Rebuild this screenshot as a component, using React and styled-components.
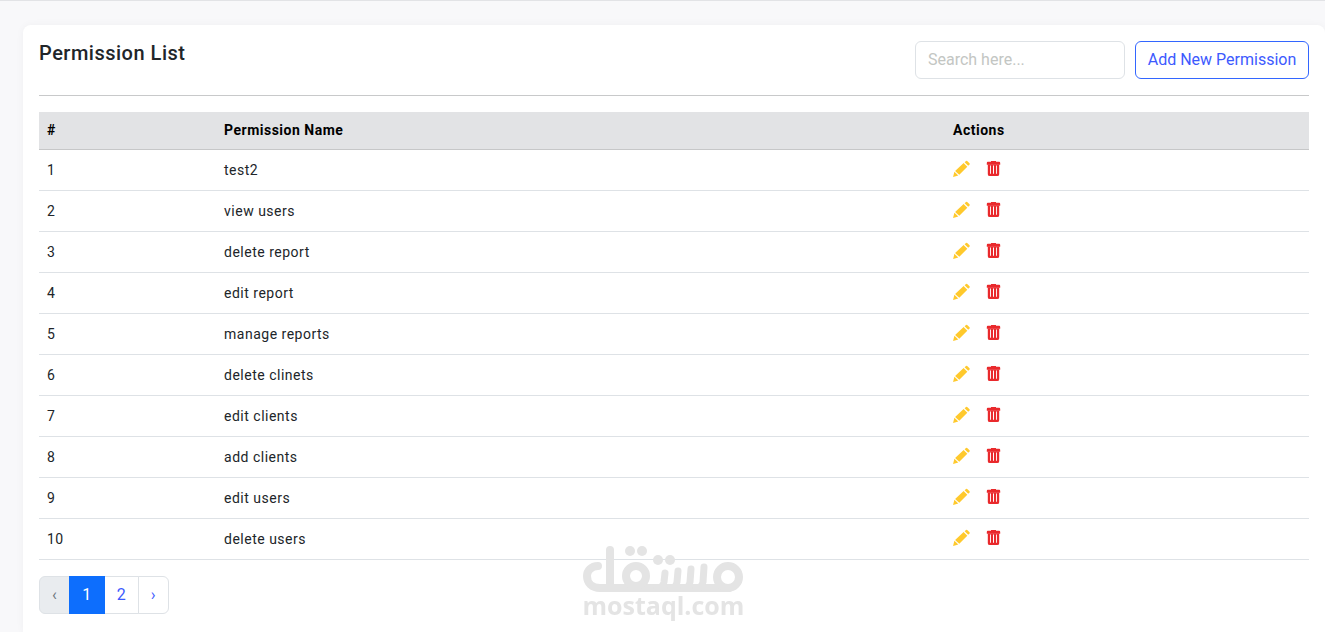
import React from "react";
import styled, { createGlobalStyle, css } from "styled-components";

const GlobalStyle = createGlobalStyle`
  *, *::before, *::after { box-sizing: border-box; }
  body {
    margin: 0;
    background: #f8f8fa;
    color: #212529;
    font-family: Roboto, "Liberation Sans", sans-serif;
    font-size: 14px;
    line-height: 21px;
  }
`;

const Page = styled.div`
  display: flex;
  flex-direction: column;
  min-height: 100vh;
  border-top: 1px solid #e2e3e6;
  padding: 24px 0 0 23px;
`;

const Card = styled.main`
  flex: 1;
  padding: 16px;
  background: #fff;
  border-radius: 8px 8px 0 0;
  box-shadow: 0 0 8px rgba(0, 0, 0, 0.04);
`;

const Header = styled.header`
  display: flex;
  justify-content: space-between;
  align-items: flex-start;
  padding-bottom: 16px;
  border-bottom: 1px solid #c8c9ca;
  margin-bottom: 16px;
`;

const Title = styled.h1`
  margin: 0;
  font-size: 20px;
  line-height: 24px;
  font-weight: 500;
  letter-spacing: 0.5px;
`;

const Tools = styled.div`
  display: flex;
  gap: 10px;
`;

const SearchInput = styled.input`
  width: 210px;
  height: 38px;
  padding: 5px 12px 7px;
  border: 1px solid #dee2e6;
  border-radius: 6px;
  background: #fff;
  color: #212529;
  font: 400 16px/24px Roboto, "Liberation Sans", sans-serif;
  &::placeholder { color: #c3c6c3; opacity: 1; }
`;

const AddButton = styled.button`
  width: 174px;
  height: 38px;
  padding: 0;
  border: 1px solid #3366ff;
  border-radius: 6px;
  background: #fff;
  color: #3d5afe;
  font: 400 16px/24px Roboto, "Liberation Sans", sans-serif;
  white-space: nowrap;
  cursor: pointer;
`;

const Table = styled.table`
  width: 100%;
  table-layout: fixed;
  border-collapse: separate;
  border-spacing: 0;
  letter-spacing: 0.5px;
`;

const HeadCell = styled.th`
  width: ${({ $width }) => $width};
  padding: 8px;
  text-align: left;
  font-weight: 700;
  color: #000;
  background: #e2e3e5;
  border-bottom: 1px solid #c6c7c8;
`;

const Cell = styled.td`
  height: 41px;
  padding: 8px;
  border-bottom: 1px solid #dee2e6;
`;

const Actions = styled.div`
  display: flex;
  gap: 16px;
  height: 24px;
`;

const IconButton = styled.button`
  width: 17px;
  height: 22px;
  padding: 0;
  border: 0;
  background: none;
  color: ${({ $color }) => $color};
  cursor: pointer;
  svg { display: block; }
`;

const Pagination = styled.nav`
  display: flex;
  margin-top: 16px;
`;

const pageState = {
  active: css`
    position: relative;
    z-index: 1;
    width: 36px;
    padding: 0;
    background: #0d6efd;
    border-color: #0d6efd;
    color: #fff;
  `,
  disabled: css`background: #e9ecef; color: #6c757d;`,
};

const PageButton = styled.button`
  height: 38px;
  padding: 0 12px;
  border: 1px solid #dee2e6;
  background: #fff;
  color: #3d5afe;
  font: 400 16px/24px Roboto, "Liberation Sans", sans-serif;
  cursor: pointer;
  &:not(:first-child) { margin-left: -1px; }
  &:first-child { border-radius: 6px 0 0 6px; }
  &:last-child { border-radius: 0 6px 6px 0; }
  ${({ $state }) => pageState[$state]}
`;

const Watermark = styled.div`
  position: fixed;
  left: 50%;
  bottom: 15px;
  width: 160px;
  transform: translateX(-50%);
  color: #e4e4e4;
  text-align: center;
  font: 700 25px/24px "Open Sans", "Liberation Sans", sans-serif;
  pointer-events: none;
  svg { display: block; }
`;

const PencilIcon = () => (
  <svg width="17" height="18" viewBox="0 0 17 18" fill="currentColor" aria-hidden="true">
    <path d="M0.1 17 1.4 11.8 5.3 15.6Z" />
    <path d="M2.1 10.9 10.6 3.1 14.3 6.8 6.3 14.8Z" />
    <path d="M11.6 2.2 13 0.9Q13.6 0.5 14.2 1L16.5 3.3Q17 3.9 16.5 4.5L15.2 5.8Z" />
  </svg>
);

const TrashIcon = () => (
  <svg width="17" height="18" viewBox="0 0 17 18" fill="currentColor" aria-hidden="true">
    <path d="M5 1H10V1.8H13.2Q14.2 1.8 14.2 3V4.7H0.8V3Q0.8 1.8 1.8 1.8H5Z" />
    <path
      fillRule="evenodd"
      d="M1.8 4.5H13.2V14.2Q13.2 16.1 11.2 16.1H3.8Q1.8 16.1 1.8 14.2ZM4.1 5.6V13.8H5V5.6ZM7 5.6V13.8H8V5.6ZM10 5.6V13.8H10.9V5.6Z"
    />
  </svg>
);

const WatermarkLogo = () => (
  <svg width="160" height="48" viewBox="0 0 160 48" fill="none" stroke="currentColor" strokeWidth="8" strokeLinecap="round" aria-hidden="true">
    <path d="M15 21C8 21 4 26 4 31C4 38 9 43 17 43H146" />
    <path d="M27 5V43" />
    <circle cx="53" cy="31" r="10" />
    <path
      strokeWidth="7"
      d="M82 28 81 37Q80 43 74 43M95 26 94 37Q93 43 88 43M108 24 107 37Q106 43 101 43M121 22 120 37Q119 43 113 43"
    />
    <circle cx="145" cy="32" r="11" />
    <g fill="currentColor" stroke="none">
      <circle cx="47" cy="6" r="5" />
      <circle cx="59" cy="6" r="5" />
      <circle cx="75" cy="15" r="5" />
      <circle cx="87" cy="15" r="5" />
    </g>
  </svg>
);

const permissions = [
  "test2",
  "view users",
  "delete report",
  "edit report",
  "manage reports",
  "delete clinets",
  "edit clients",
  "add clients",
  "edit users",
  "delete users",
];

export default function App() {
  return (
    <>
      <GlobalStyle />
      <Page>
        <Card>
          <Header>
            <Title>Permission List</Title>
            <Tools>
              <SearchInput type="text" aria-label="Search permissions" placeholder="Search here..." />
              <AddButton type="button">Add New Permission</AddButton>
            </Tools>
          </Header>
          <Table>
            <thead>
              <tr>
                <HeadCell scope="col" $width="13.94%">#</HeadCell>
                <HeadCell scope="col" $width="57.4%">Permission Name</HeadCell>
                <HeadCell scope="col">Actions</HeadCell>
              </tr>
            </thead>
            <tbody>
              {permissions.map((name, i) => (
                <tr key={name}>
                  <Cell>{i + 1}</Cell>
                  <Cell>{name}</Cell>
                  <Cell>
                    <Actions>
                      <IconButton type="button" $color="#ffc92c" aria-label={`Edit ${name}`}>
                        <PencilIcon />
                      </IconButton>
                      <IconButton type="button" $color="#e9292c" aria-label={`Delete ${name}`}>
                        <TrashIcon />
                      </IconButton>
                    </Actions>
                  </Cell>
                </tr>
              ))}
            </tbody>
          </Table>
          <Pagination aria-label="Pages">
            <PageButton type="button" disabled $state="disabled" aria-label="Previous page">‹</PageButton>
            <PageButton type="button" $state="active" aria-current="page">1</PageButton>
            <PageButton type="button">2</PageButton>
            <PageButton type="button" aria-label="Next page">›</PageButton>
          </Pagination>
        </Card>
      </Page>
      <Watermark>
        <WatermarkLogo />
        mostaql.com
      </Watermark>
    </>
  );
}
